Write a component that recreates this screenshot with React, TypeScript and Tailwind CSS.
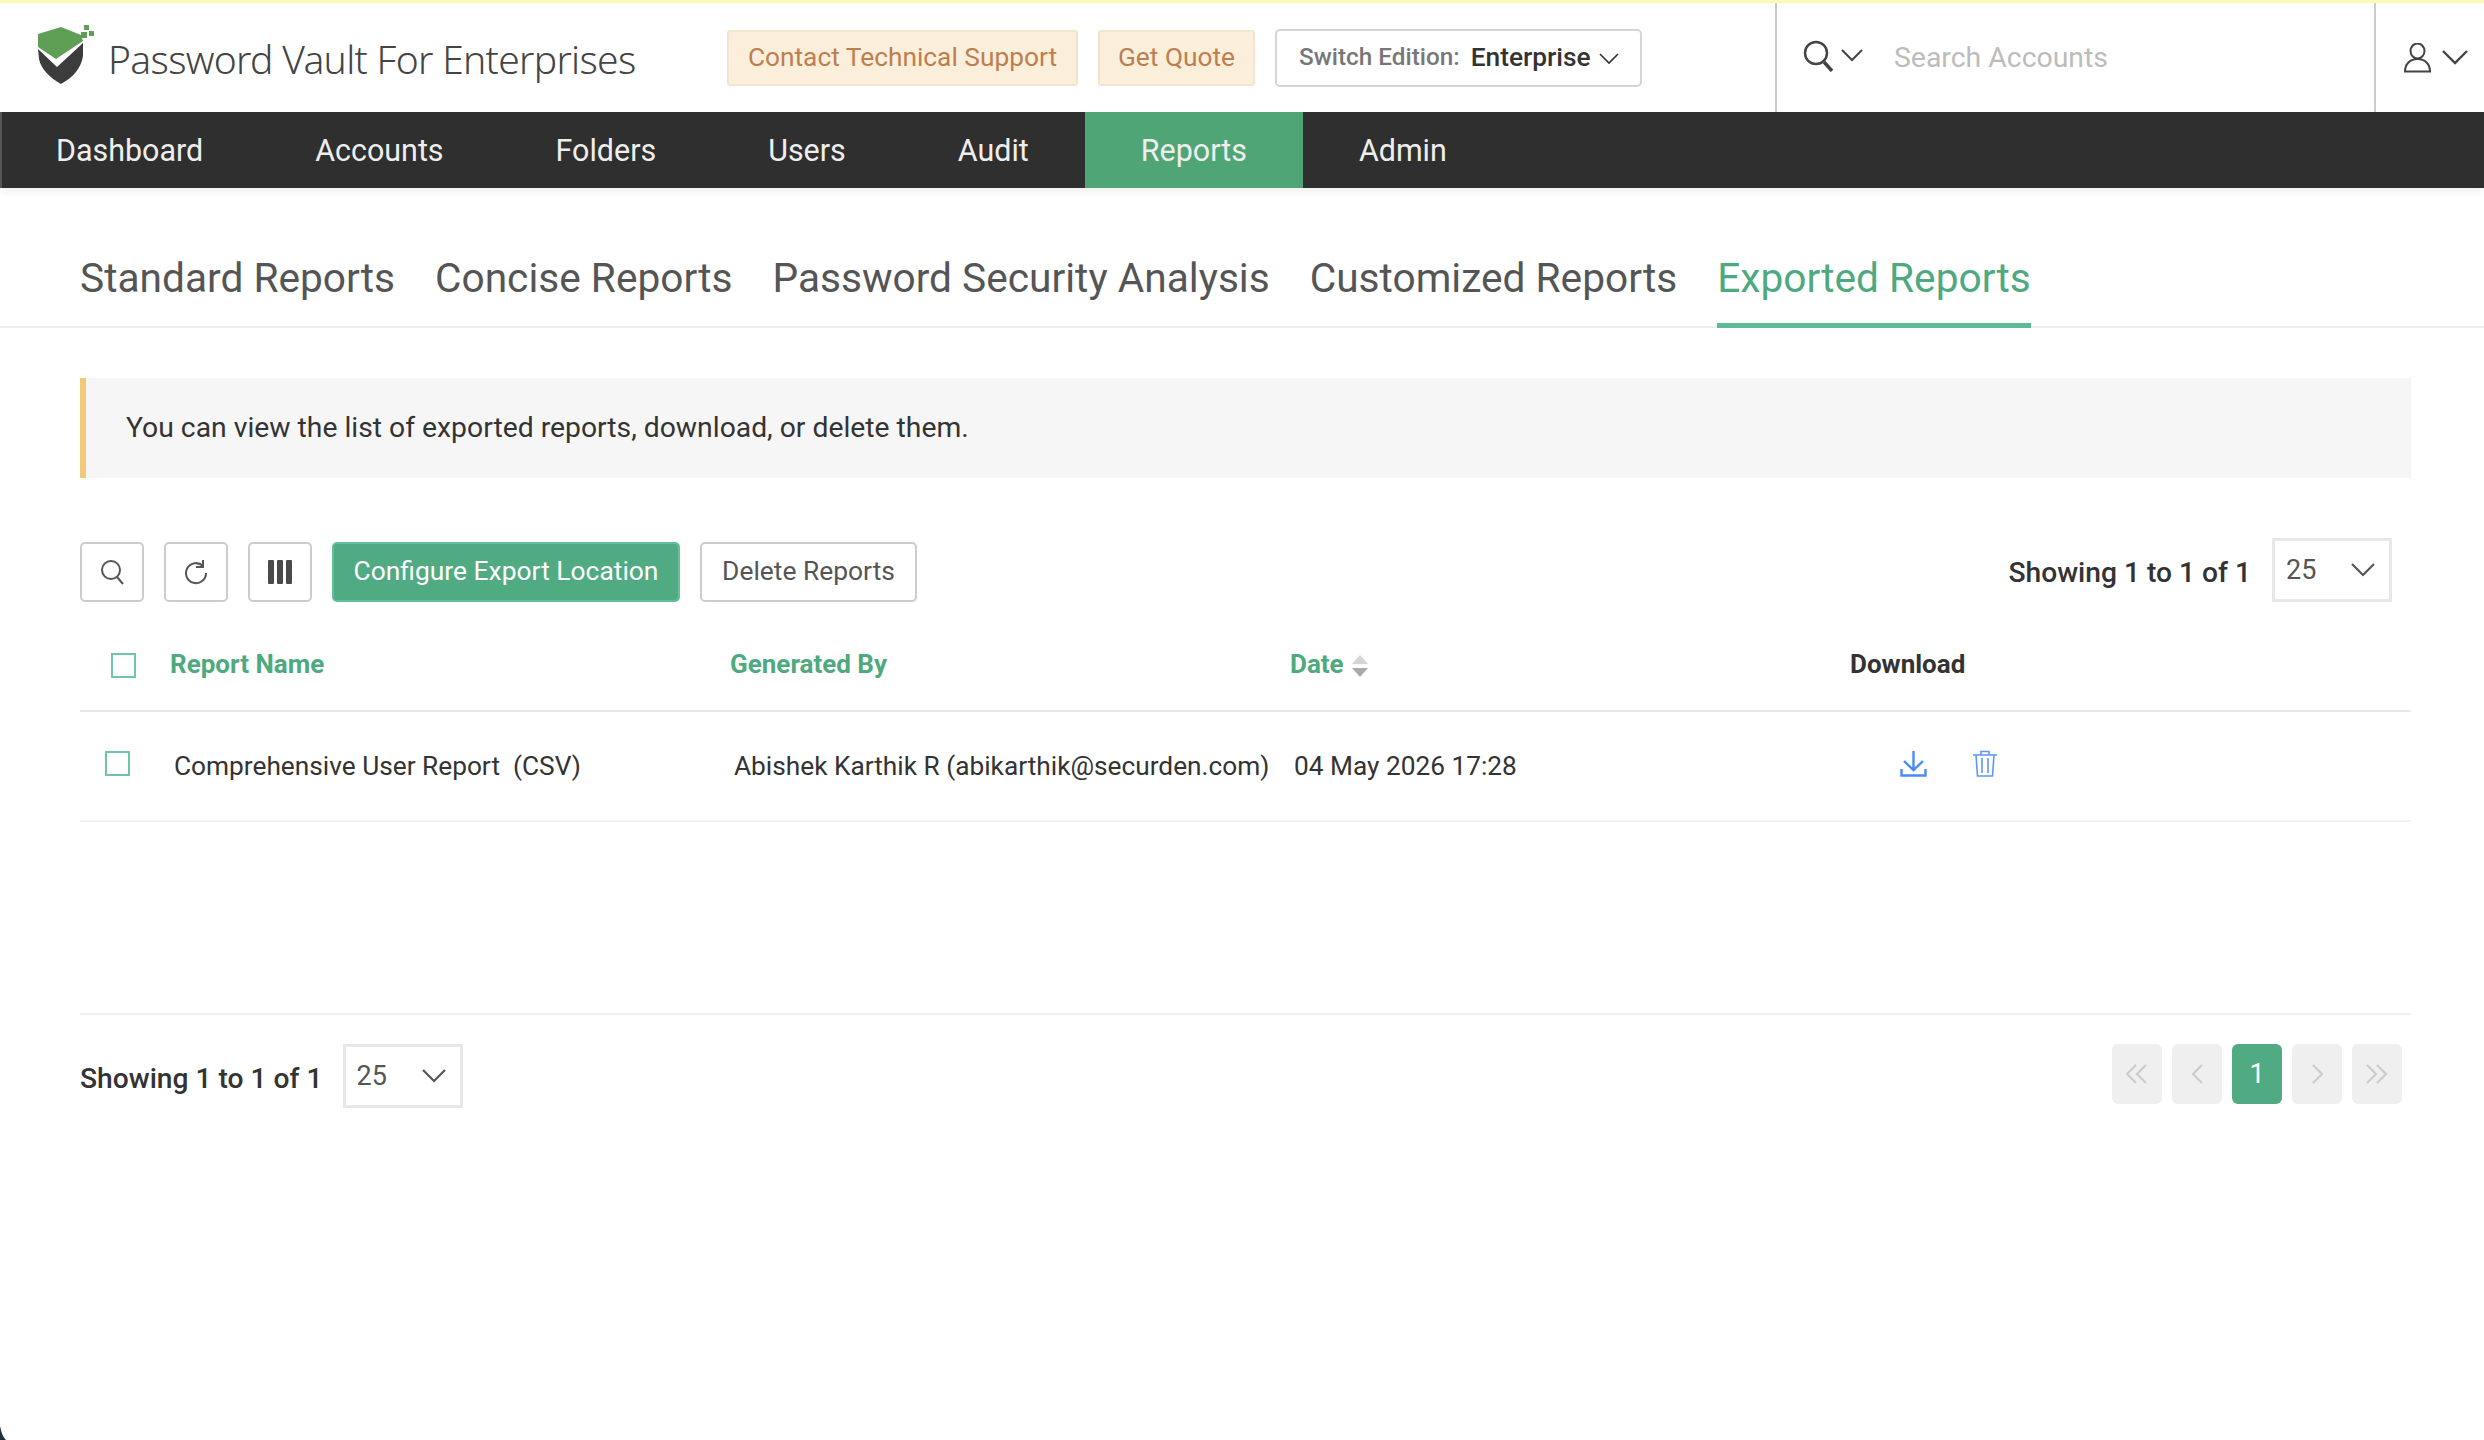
const navItems = ['Dashboard', 'Accounts', 'Folders', 'Users', 'Audit', 'Reports', 'Admin'];
const tabs = ['Standard Reports', 'Concise Reports', 'Password Security Analysis', 'Customized Reports', 'Exported Reports'];

function Logo() {
    return (
        <svg width="60" height="60" viewBox="36 26 60 60" className="shrink-0">
            <path d="M38 35L61 28L81 36L83 42L56 60L38 48Z" fill="#5f9f55" />
            <path d="M38 50L57 68L83 44V57C81 70 72 79 61 85C50 79 41 70 39 60Z" fill="#3c3c3c" />
            <rect x="84" y="26" width="5" height="5" fill="#5f9f55" />
            <rect x="81" y="33" width="6" height="6" fill="#5f9f55" />
            <rect x="89" y="32" width="5" height="5" fill="#5f9f55" />
        </svg>
    );
}

function PageSelect() {
    return (
        <div className="flex items-center justify-between w-[120px] h-[64px] border-[3px] border-[#e8e8e8] pl-[11px] pr-[14px] text-[27px] text-[#555]">
            <span className="mt-[1px]">25</span>
            <svg width="24" height="14" viewBox="0 0 24 14" fill="none" stroke="#555" strokeWidth="2.2"><path d="M1 1L12 12L23 1" /></svg>
        </div>
    );
}

function Checkbox() {
    return <div className="w-[25px] h-[25px] border-2 border-[#6fc5a8]" />;
}

function ToolButton({ children }: { children: React.ReactNode }) {
    return (
        <div className="w-[64px] h-[60px] flex items-center justify-center border-2 border-[#ccc] rounded-[5px] text-[#555]">
            {children}
        </div>
    );
}

function PageButton({ children, active }: { children: React.ReactNode; active?: boolean }) {
    return (
        <div className={active
            ? 'w-[50px] h-[60px] flex items-center justify-center rounded-[6px] bg-[#50ab83] text-white text-[27px]'
            : 'w-[50px] h-[60px] flex items-center justify-center rounded-[6px] bg-[#efefef]'}>
            {children}
        </div>
    );
}

export default function App() {
    return (
        <div className="relative w-[2484px] h-[1440px] bg-white overflow-hidden font-['Roboto',sans-serif] text-[#333]">
            {/* top bar */}
            <header className="h-[112px] border-t-[3px] border-[#fdfbb0] flex items-stretch">
                <div className="flex items-center w-[1775px] pl-[36px]">
                    <div className="-mt-[6px]"><Logo /></div>
                    <div className="ml-[12px] mt-[3px] w-[619px] font-['Noto_Sans',sans-serif] font-light text-[39px] tracking-[-0.68px] text-[#444] whitespace-nowrap">
                        Password Vault For Enterprises
                    </div>
                    <div className="flex items-center">
                        <div className="h-[56px] w-[351px] pt-[1px] flex items-center justify-center rounded-[3px] border-2 border-[#f3e5cd] bg-[#fbefdb] text-[#bd7f50] text-[26.3px]">
                            Contact Technical Support
                        </div>
                        <div className="ml-[20px] h-[56px] w-[157px] pt-[1px] flex items-center justify-center rounded-[3px] border-2 border-[#f3e5cd] bg-[#fbefdb] text-[#bd7f50] text-[26.3px]">
                            Get Quote
                        </div>
                        <div className="ml-[20px] h-[58px] w-[367px] flex items-center pl-[22px] rounded-[5px] border-2 border-[#d5d5d5] text-[#333]">
                            <span className="text-[24.3px] font-medium text-[#777]">Switch Edition:</span>
                            <span className="ml-[11px] text-[26.3px] font-medium">Enterprise</span>
                            <svg width="20" height="12" viewBox="0 0 20 12" fill="none" stroke="#333" strokeWidth="1.6" className="ml-[8px] mt-[3px]"><path d="M1 1L10 10L19 1" /></svg>
                        </div>
                    </div>
                </div>
                <div className="flex items-center w-[601px] border-l-2 border-r-2 border-[#ccc] pl-[26px]">
                    <div className="flex items-center gap-[6px] -mt-[4px]">
                        <svg width="32" height="32" viewBox="0 0 32 32" fill="none" stroke="#444" strokeWidth="2.5">
                            <circle cx="13" cy="13" r="11" />
                            <path d="M21 22L29 31" strokeWidth="3.5" />
                        </svg>
                        <svg width="22" height="13" viewBox="0 0 22 13" fill="none" stroke="#444" strokeWidth="2"><path d="M1 1L11 11L21 1" /></svg>
                    </div>
                    <span className="ml-[31px] mt-[2px] text-[28.4px] text-[#bcbcbc]">Search Accounts</span>
                </div>
                <div className="flex items-center gap-[10px] pl-[27px]">
                    <svg width="29" height="30" viewBox="0 0 29 30" fill="none" stroke="#444" strokeWidth="2">
                        <ellipse cx="14.5" cy="8" rx="7" ry="7.5" />
                        <path d="M2 28.5C2 21 7 16 14.5 16C22 16 27 21 27 28.5Z" />
                    </svg>
                    <svg width="26" height="15" viewBox="0 0 26 15" fill="none" stroke="#444" strokeWidth="2.4"><path d="M1 1L13 13L25 1" /></svg>
                </div>
            </header>

            {/* main nav */}
            <nav className="h-[76px] bg-[#2f2f2f] flex shadow-[inset_2px_0_0_#555,0_4px_8px_rgba(0,0,0,0.06)]">
                {navItems.map((item) => (
                    <div key={item} className={item === 'Reports'
                        ? 'px-[56px] pt-[1px] flex items-center bg-[#4fa576] text-[30.45px] text-[#eee]'
                        : 'px-[56px] pt-[1px] flex items-center text-[30.45px] text-[#eee]'}>
                        {item}
                    </div>
                ))}
            </nav>

            {/* report tabs */}
            <div className="h-[140px] border-b-2 border-[#eee] pl-[80px] flex gap-[40px] items-end">
                {tabs.map((tab) => (
                    <div key={tab} className={tab === 'Exported Reports'
                        ? 'h-[88px] pt-[8px] -mb-[2px] text-[40.65px] text-[#4fa97f] border-b-[5px] border-[#5dbc96]'
                        : 'h-[88px] pt-[8px] -mb-[2px] text-[40.65px] text-[#555]'}>
                        {tab}
                    </div>
                ))}
            </div>

            <main className="px-[80px] pr-[73px]">
                <div className="mt-[50px] h-[100px] flex items-center bg-[#f6f6f6] border-l-[6px] border-[#f2c879] pl-[40px] text-[28.3px] text-[#333]">
                    You can view the list of exported reports, download, or delete them.
                </div>

                {/* toolbar */}
                <div className="mt-[60px] h-[64px] flex items-end justify-between pr-[19px]">
                    <div className="flex items-center gap-[20px]">
                        <ToolButton>
                            <svg width="24" height="26" viewBox="0 0 24 26" fill="none" stroke="#555" strokeWidth="2">
                                <circle cx="11" cy="11" r="9" />
                                <path d="M17 18L23 25" />
                            </svg>
                        </ToolButton>
                        <ToolButton>
                            <svg width="24" height="26" viewBox="0 0 24 26" fill="none" stroke="#555" strokeWidth="2">
                                <path d="M19 7A10 10 0 1 0 22 14" />
                                <path d="M19 1V8H12" />
                            </svg>
                        </ToolButton>
                        <ToolButton>
                            <svg width="26" height="26" viewBox="0 0 26 26" fill="#4a4a4a">
                                <rect x="1" y="1" width="6" height="24" rx="1" />
                                <rect x="10" y="1" width="6" height="24" rx="1" />
                                <rect x="19" y="1" width="6" height="24" rx="1" />
                            </svg>
                        </ToolButton>
                        <div className="w-[348px] h-[60px] flex items-center justify-center rounded-[5px] border-2 border-[#64bf9d] bg-[#50ab83] text-white text-[26.4px]">
                            Configure Export Location
                        </div>
                        <div className="w-[217px] h-[60px] flex items-center justify-center rounded-[5px] border-2 border-[#ccc] text-[#555] text-[26.4px]">
                            Delete Reports
                        </div>
                    </div>
                    <div className="flex items-center gap-[21px]">
                        <span className="mt-[6px] text-[28.2px] font-medium text-[#333]">Showing 1 to 1 of 1</span>
                        <PageSelect />
                    </div>
                </div>

                {/* table head */}
                <div className="mt-[30px] h-[80px] flex items-center border-b-2 border-[#e8e8e8] text-[26px] font-bold text-[#4fa97f] pb-[14px]">
                    <div className="w-[90px] pl-[31px] mt-[3px]"><Checkbox /></div>
                    <div className="w-[560px]">Report Name</div>
                    <div className="w-[560px]">Generated By</div>
                    <div className="w-[560px] flex items-center gap-[7px]">
                        Date
                        <svg width="18" height="24" viewBox="0 0 18 24" className="mt-[4px]">
                            <path d="M9 1L17 10H1Z" fill="#d5d5d5" />
                            <path d="M9 23L17 14H1Z" fill="#aaa" />
                        </svg>
                    </div>
                    <div className="text-[#333]">Download</div>
                </div>

                {/* table row */}
                <div className="h-[110px] pt-[1px] flex items-center border-b-2 border-[#f2f2f2] text-[26.25px] text-[#333]">
                    <div className="w-[94px] pl-[25px] -mt-[6px]"><Checkbox /></div>
                    <div className="w-[560px] whitespace-pre">Comprehensive User Report  (CSV)</div>
                    <div className="w-[560px] whitespace-nowrap">Abishek Karthik R (abikarthik@securden.com)</div>
                    <div className="w-[606px]">04 May 2026 17:28</div>
                    <div className="flex items-center gap-[45px] -mt-[6px]">
                        <svg width="27" height="27" viewBox="0 0 27 27" fill="none" stroke="#4a8cf7" strokeWidth="2.4">
                            <path d="M13.5 1V19M4 11L13.5 20L23 11" />
                            <path d="M1.5 19V25.5H25.5V19" />
                        </svg>
                        <svg width="26" height="27" viewBox="0 0 26 27" fill="none" stroke="#5d97f8" strokeWidth="1.6">
                            <path d="M1 5H25M9 5V1.5H17V5M4 5L5.5 26H20.5L22 5M10 8V23M16 8V23" />
                        </svg>
                    </div>
                </div>

                {/* footer */}
                <div className="mt-[191px] border-t-2 border-[#f0f0f0] h-[95px] flex items-end justify-between pr-[9px]">
                    <div className="flex items-center gap-[20px]">
                        <span className="mt-[6px] text-[28.2px] font-medium text-[#333]">Showing 1 to 1 of 1</span>
                        <PageSelect />
                    </div>
                    <div className="flex gap-[10px] mb-[4px]">
                        <PageButton>
                            <svg width="22" height="20" viewBox="0 0 22 20" fill="none" stroke="#ccc" strokeWidth="2.2"><path d="M10 1L1 10L10 19M20 1L11 10L20 19" /></svg>
                        </PageButton>
                        <PageButton>
                            <svg width="11" height="20" viewBox="0 0 11 20" fill="none" stroke="#ccc" strokeWidth="2.2"><path d="M10 1L1 10L10 19" /></svg>
                        </PageButton>
                        <PageButton active>1</PageButton>
                        <PageButton>
                            <svg width="11" height="20" viewBox="0 0 11 20" fill="none" stroke="#ccc" strokeWidth="2.2"><path d="M1 1L10 10L1 19" /></svg>
                        </PageButton>
                        <PageButton>
                            <svg width="22" height="20" viewBox="0 0 22 20" fill="none" stroke="#ccc" strokeWidth="2.2"><path d="M1 1L10 10L1 19M11 1L20 10L11 19" /></svg>
                        </PageButton>
                    </div>
                </div>
            </main>

            {/* dark window corner at the bottom left */}
            <svg width="6" height="14" viewBox="0 0 6 14" className="absolute left-0 bottom-0">
                <path d="M0 0C1 6 3 11 6 14H0Z" fill="#1f2d3d" />
            </svg>
        </div>
    );
}
